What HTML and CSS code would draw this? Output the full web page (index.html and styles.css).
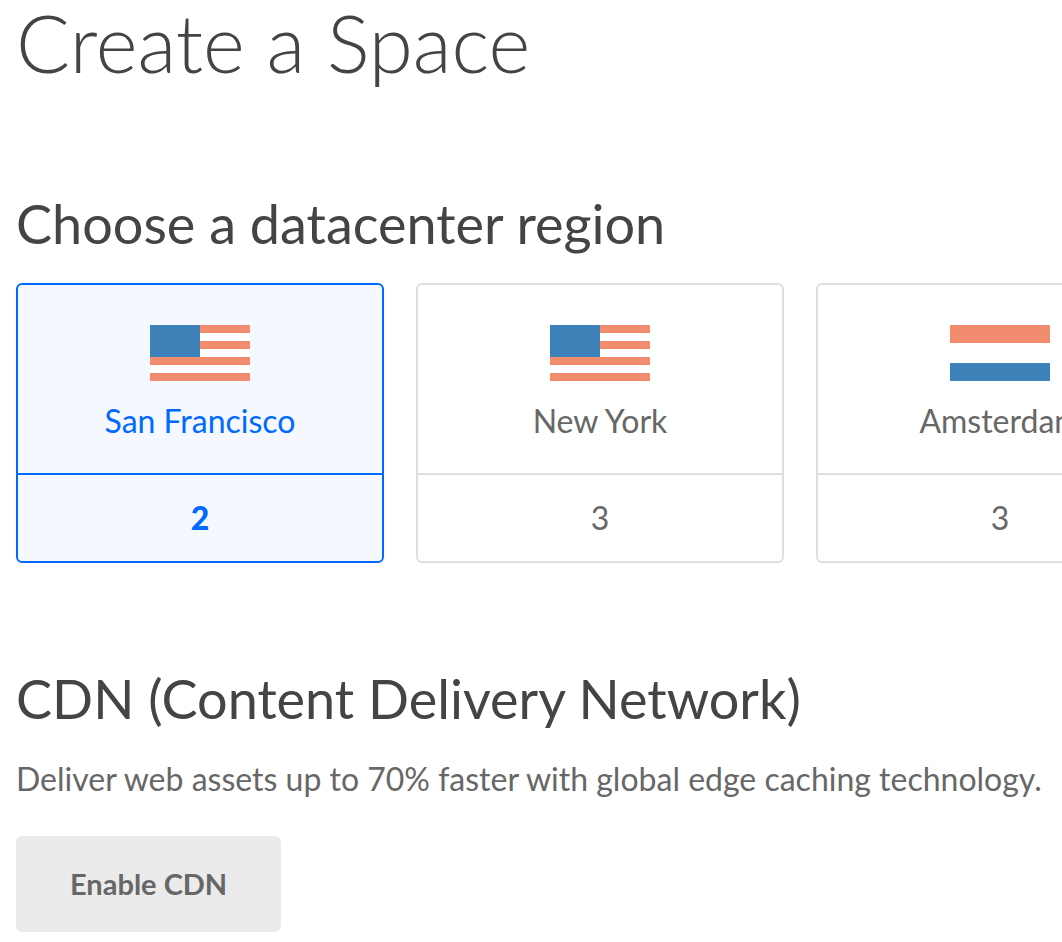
FILE: index.html
```html
<!DOCTYPE html>
<html lang="en">
<head>
<meta charset="utf-8">
<meta name="viewport" content="width=device-width, initial-scale=1">
<title>Create a Space</title>
<link rel="stylesheet" href="styles.css">
</head>
<body>
<main class="page">
  <h1 class="page-title">Create a Space</h1>
  <section class="section">
    <h2 class="section-title">Choose a datacenter region</h2>
    <div class="regions">
      <article class="region region-selected">
        <div class="region-head">
          <svg class="flag" viewBox="0 0 100 56" aria-hidden="true"><path fill="#fff" d="M0 0h100v56H0z"/><path fill="#f18c6e" d="M0 0h100v8H0zM0 16h100v8H0zM0 32h100v8H0zM0 48h100v8H0z"/><path fill="#3e82ba" d="M0 0h50v32H0z"/></svg>
          <h3 class="region-name">San Francisco</h3>
        </div>
        <button class="region-option" type="button" aria-pressed="true">2</button>
      </article>
      <article class="region">
        <div class="region-head">
          <svg class="flag" viewBox="0 0 100 56" aria-hidden="true"><path fill="#fff" d="M0 0h100v56H0z"/><path fill="#f18c6e" d="M0 0h100v8H0zM0 16h100v8H0zM0 32h100v8H0zM0 48h100v8H0z"/><path fill="#3e82ba" d="M0 0h50v32H0z"/></svg>
          <h3 class="region-name">New York</h3>
        </div>
        <button class="region-option" type="button" aria-pressed="false">3</button>
      </article>
      <article class="region">
        <div class="region-head">
          <svg class="flag" viewBox="0 0 100 56" aria-hidden="true"><path fill="#fff" d="M0 0h100v56H0z"/><path fill="#f18c6e" d="M0 0h100v18H0z"/><path fill="#3e82ba" d="M0 38h100v18H0z"/></svg>
          <h3 class="region-name">Amsterdam</h3>
        </div>
        <button class="region-option" type="button" aria-pressed="false">3</button>
      </article>
    </div>
  </section>
  <section class="section">
    <h2 class="section-title">CDN (Content Delivery Network)</h2>
    <p class="description">Deliver web assets up to 70% faster with global edge caching technology.</p>
    <button class="enable" type="button">Enable CDN</button>
  </section>
</main>
</body>
</html>
```
FILE: styles.css
```css
* {
  box-sizing: border-box;
}

body {
  margin: 0;
  overflow-x: hidden;
  background: #fff;
  color: #444;
  font-family: Lato, "Open Sans", sans-serif;
}

h1, h2, h3, p {
  margin: 0;
}

.page {
  padding: 0 16px 10px;
}

.page-title {
  padding-bottom: 4px;
  font-size: 80px;
  font-weight: 300;
  line-height: 84px;
}

.section {
  margin-top: 104px;
}

.section-title {
  font-size: 54px;
  font-weight: 400;
  line-height: 64px;
}

.regions {
  display: flex;
  gap: 32px;
  margin-top: 27px;
}

.region {
  flex: 0 0 368px;
  border: 2px solid #dedede;
  border-radius: 6px;
  color: #676767;
  overflow: hidden;
}

.region-head {
  display: flex;
  flex-direction: column;
  align-items: center;
  gap: 20px;
  padding: 40px 0 32px;
}

.flag {
  display: block;
  width: 100px;
  height: 56px;
}

.region-name {
  font-size: 32px;
  font-weight: 400;
  line-height: 40px;
}

.region-option {
  display: block;
  width: 100%;
  padding: 22px 0;
  border: 0;
  border-top: 2px solid #dedede;
  background: transparent;
  color: inherit;
  font: inherit;
  font-size: 32px;
  line-height: 42px;
}

.region-selected,
.region-selected .region-option {
  border-color: #0069ff;
  color: #0069ff;
}

.region-selected {
  background: #f5f9ff;
}

.region-selected .region-option {
  font-weight: 900;
}

.description {
  margin-top: 26px;
  color: #676767;
  font-size: 32px;
  line-height: 44px;
}

.enable {
  margin-top: 35px;
  padding: 28px 54px;
  border: 0;
  border-radius: 6px;
  background: #ebebeb;
  color: #676767;
  font: inherit;
  font-size: 29px;
  font-weight: 700;
  line-height: 40px;
}
```
